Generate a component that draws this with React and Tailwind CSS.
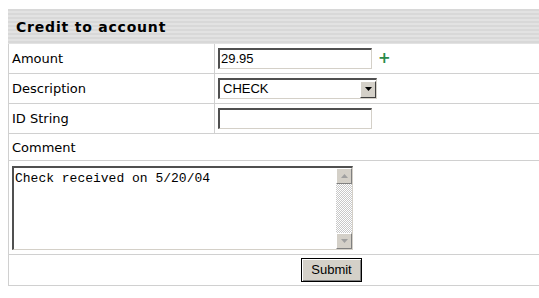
import React from 'react';

const inset =
  'border-t-2 border-l-2 border-b border-r border-t-[#505050] border-l-[#505050] border-b-[#d4d0c8] border-r-[#d4d0c8]';

const Row = ({ label, children }) => (
  <div className="flex h-[30px] border-b border-[#d0d0d0]">
    <div className="flex w-[205px] items-center pl-[3px] pt-[1px]">{label}</div>
    <div className="flex flex-1 items-center border-l border-[#d0d0d0] pl-[3px]">{children}</div>
  </div>
);

const ScrollBtn = ({ up }) => (
  <div className="flex h-[16px] w-[16px] items-center justify-center border border-t-white border-l-white border-r-[#808080] border-b-[#808080] bg-[#d4d0c8]">
    <svg width="7" height="4" viewBox="0 0 7 4">
      {up ? <path d="M3.5 0 L7 4 L0 4 Z" fill="#a0a0a0" /> : <path d="M0 0 L7 0 L3.5 4 Z" fill="#a0a0a0" />}
    </svg>
  </div>
);

export default function App() {
  return (
    <div className="h-[298px] w-[539px] overflow-hidden bg-white pl-[8px] pt-[9px] font-['DejaVu_Sans',Verdana,sans-serif] text-[13px] text-black">
      <div className="w-[600px]">
        {/* Header */}
        <div className="flex h-[35px] items-center bg-[repeating-linear-gradient(180deg,#d8d8d8_0px,#d8d8d8_2px,#e2e2e2_2px,#e2e2e2_4px)] pl-[8px] pt-[2px] text-[14px] font-bold tracking-[0.8px]">
          Credit to account
        </div>

        <div className="border-l border-[#d0d0d0]">
          <Row label="Amount">
            <div className={`${inset} flex h-[21px] w-[154px] items-center bg-white pl-[1px] font-['Liberation_Sans',Arial,sans-serif] text-[13px]`}>
              29.95
            </div>
            <span className="ml-[6px] text-[15px] font-bold leading-none text-[#2a8a4a]">+</span>
          </Row>

          <Row label="Description">
            <div className={`${inset} flex h-[21px] w-[159px] items-center justify-between bg-white font-['Liberation_Sans',Arial,sans-serif] text-[13px]`}>
              <span className="pl-[3px]">CHECK</span>
              <div className="flex h-[17px] w-[16px] items-center justify-center border border-t-white border-l-white border-r-[#404040] border-b-[#404040] bg-[#d4d0c8]">
                <svg width="7" height="4" viewBox="0 0 7 4">
                  <path d="M0 0 L7 0 L3.5 4 Z" fill="#000" />
                </svg>
              </div>
            </div>
          </Row>

          <Row label="ID String">
            <div className={`${inset} h-[21px] w-[154px] bg-white`} />
          </Row>

          <div className="flex h-[27px] items-center border-b border-[#d0d0d0] pl-[3px] pt-[2px]">Comment</div>

          <div className="h-[94px] border-b border-[#d0d0d0] pl-[3px] pt-[5px]">
            <div className={`${inset} flex h-[84px] w-[341px] bg-white`}>
              <div className="flex-1 pl-[1px] pt-[3px] font-['Liberation_Mono','Courier_New',monospace] text-[13px] leading-[15px]">
                Check received on 5/20/04
              </div>
              <div className="flex w-[16px] flex-col bg-[repeating-conic-gradient(#c8c8c8_0_25%,#ffffff_0_50%)] bg-[length:2px_2px]">
                <ScrollBtn up />
                <div className="flex-1" />
                <ScrollBtn />
              </div>
            </div>
          </div>

          <div className="flex h-[31px] items-center border-b border-[#d0d0d0] pl-[292px]">
            <button className="h-[24px] w-[61px] border border-black bg-[#d4d0c8] font-['Liberation_Sans',Arial,sans-serif] text-[13px] shadow-[inset_1px_1px_0_#fff,inset_-1px_-1px_0_#808080]">
              Submit
            </button>
          </div>
        </div>
      </div>
    </div>
  );
}
